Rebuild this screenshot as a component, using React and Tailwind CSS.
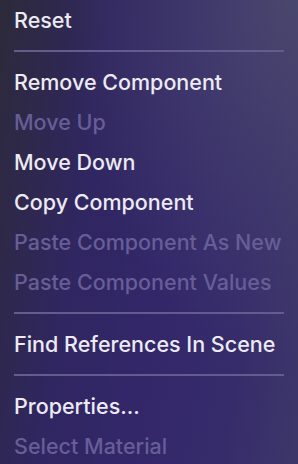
import React from "react";

const Item = ({ children, disabled }) => (
  <div
    className={
      "h-[40px] flex items-center pl-[14px] text-[21.5px] font-medium tracking-[0px] whitespace-nowrap " +
      (disabled ? "text-[#675e97]" : "text-[#eceaf2]")
    }
  >
    {children}
  </div>
);

const Sep = () => (
  <div className="h-[22px] flex items-center px-[14px]">
    <div className="h-[2px] w-full bg-[#645c8f]" />
  </div>
);

export default function App() {
  return (
    <div
      className="w-[298px] h-[464px] overflow-hidden bg-[radial-gradient(ellipse_at_100%_0%,rgba(80,80,110,0.75)_0%,rgba(80,80,110,0)_55%),linear-gradient(100deg,#2d2a39_0%,#302660_30%,#33276a_55%,#362b6b_78%,#3d3769_100%)]"
      style={{ fontFamily: "Inter, 'Noto Sans', sans-serif" }}
    >
      <Item>Reset</Item>
      <Sep />
      <Item>Remove Component</Item>
      <Item disabled>Move Up</Item>
      <Item>Move Down</Item>
      <Item>Copy Component</Item>
      <Item disabled>Paste Component As New</Item>
      <Item disabled>Paste Component Values</Item>
      <Sep />
      <Item>Find References In Scene</Item>
      <Sep />
      <Item>Properties...</Item>
      <Item disabled>Select Material</Item>
    </div>
  );
}
